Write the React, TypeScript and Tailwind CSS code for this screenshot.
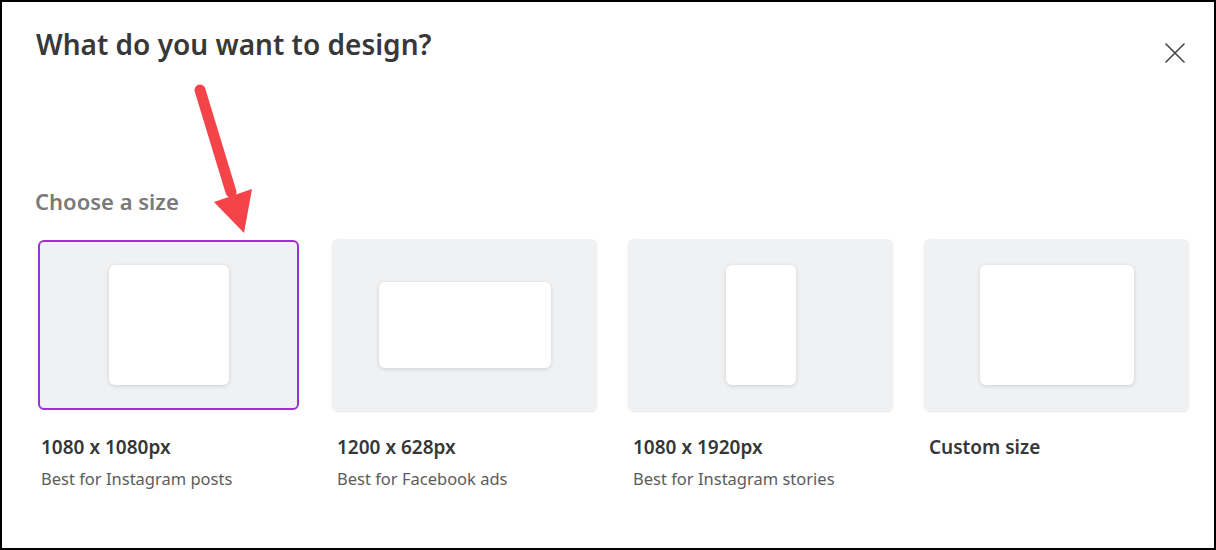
import React from 'react';

type SizeOption = {
    label: string;
    hint?: string;
    shape: string;
};

const options: SizeOption[] = [
    { label: '1080 x 1080px', hint: 'Best for Instagram posts', shape: 'w-[120px] h-[120px]' },
    { label: '1200 x 628px', hint: 'Best for Facebook ads', shape: 'w-[172px] h-[86px]' },
    { label: '1080 x 1920px', hint: 'Best for Instagram stories', shape: 'w-[70px] h-[120px]' },
    { label: 'Custom size', shape: 'w-[154px] h-[120px]' },
];

const CloseIcon: React.FC = () => (
    <svg width="20" height="20" viewBox="0 0 20 20" fill="none" stroke="#444" strokeWidth="1.6" strokeLinecap="round">
        <path d="M1 1L19 19M19 1L1 19" />
    </svg>
);

// red annotation arrow drawn over the dialog
const Arrow: React.FC = () => (
    <svg className="absolute left-0 top-0 pointer-events-none" width="300" height="260" viewBox="0 0 300 260">
        <line x1="198" y1="88" x2="229" y2="190" stroke="#f44449" strokeWidth="11" strokeLinecap="round" />
        <polygon points="212,200 250,187 242,231" fill="#f44449" />
    </svg>
);

const App: React.FC = () => {
    const selected = 0;

    return (
        <div
            className="relative w-[1216px] h-[550px] overflow-hidden bg-white border-2 border-black"
            style={{ fontFamily: '"Noto Sans", "Open Sans", sans-serif' }}
        >
            <div className="pl-[34px] pr-[25px]">
                <div className="flex items-start justify-between pt-[24px]">
                    <h1 className="text-[28px] leading-[36px] font-semibold text-[#383838]">
                        What do you want to design?
                    </h1>
                    <button className="mt-[17px] mr-[4px] p-0">
                        <CloseIcon />
                    </button>
                </div>

                <h2 className="mt-[124px] -ml-[1px] text-[22px] leading-[28px] font-semibold text-[#7a7a7a]">
                    Choose a size
                </h2>

                <div className="mt-[24px] grid grid-cols-4 gap-[31px]">
                    {options.map((opt, i) => (
                        <div key={opt.label} className="flex flex-col">
                            <div
                                className={
                                    i === selected
                                        ? 'mx-[2px] my-[1px] h-[170px] rounded-[6px] bg-[#f0f1f3] flex items-center justify-center border-[2.5px] border-[#9b2fdc]'
                                        : 'h-[172px] rounded-[6px] bg-[#f0f1f3] flex items-center justify-center shadow-[0_1px_2px_rgba(0,0,0,0.10)]'
                                }
                            >
                                <div className={`${opt.shape} rounded-[6px] bg-white shadow-[0_1px_4px_rgba(0,0,0,0.14)]`} />
                            </div>
                            <div className="pl-[5px]">
                                <div className="mt-[24px] text-[19px] leading-[24px] font-semibold text-[#363636]">
                                    {opt.label}
                                </div>
                                {opt.hint && (
                                    <div className="mt-[9px] text-[16.5px] leading-[22px] text-[#5c5c5c]">
                                        {opt.hint}
                                    </div>
                                )}
                            </div>
                        </div>
                    ))}
                </div>
            </div>

            <Arrow />
        </div>
    );
};

export default App;
